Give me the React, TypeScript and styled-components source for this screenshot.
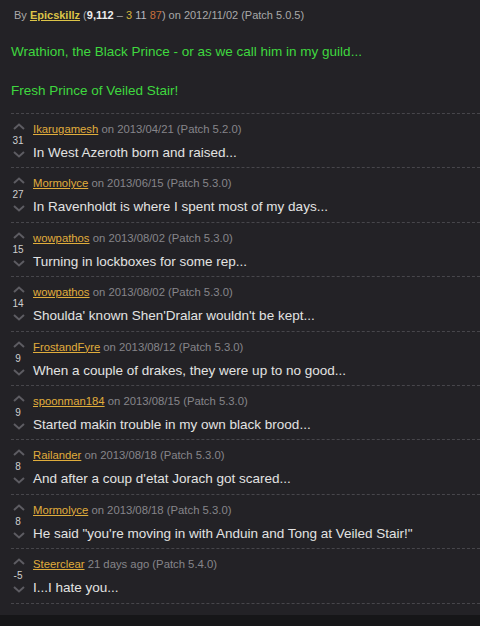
import React from "react";
import styled, { createGlobalStyle } from "styled-components";

const Global = createGlobalStyle`
  html, body { margin: 0; padding: 0; background: #232226; }
  body { font-family: "Liberation Sans", Arial, sans-serif; }
`;

const Page = styled.div`
  width: 480px;
  height: 626px;
  background: #232226;
  display: flex;
  flex-direction: column;
  overflow: hidden;
`;

const Post = styled.div`
  padding: 9px 0 0 11px;
  height: 113px;
  box-sizing: border-box;
  display: flex;
  flex-direction: column;
`;

const Byline = styled.div`
  font-size: 11px;
  line-height: 13px;
  color: #a9a9a9;
  padding-left: 3px;
`;

const Author = styled.span`
  color: #dcc448;
  font-weight: bold;
  text-decoration: underline;
`;

const Stat = styled.span<{ $c: string; $bold?: boolean }>`
  color: ${(p) => p.$c};
  font-weight: ${(p) => (p.$bold ? "bold" : "normal")};
`;

const Green = styled.p<{ $top: number }>`
  margin: 0;
  font-size: 13.5px;
  line-height: 16px;
  color: #3fd83f;
  margin-top: ${(p) => p.$top}px;
`;

const Divider = styled.div`
  margin-left: 11px;
  height: 0;
  border-top: 1px dashed #47464b;
`;

const List = styled.div`
  display: flex;
  flex-direction: column;
`;

const Comment = styled.div`
  height: 54.4px;
  box-sizing: border-box;
  display: flex;
  flex-direction: column;
`;

const Row = styled.div`
  flex: 1;
  display: flex;
  padding-left: 12px;
`;

const Votes = styled.div`
  width: 14px;
  display: flex;
  flex-direction: column;
  align-items: center;
  padding-top: 9px;
`;

const Score = styled.div`
  font-size: 10px;
  line-height: 11px;
  color: #cfcfcf;
  margin: 5px 0 5px -2px;
  height: 11px;
`;

const Body = styled.div`
  display: flex;
  flex-direction: column;
  padding-left: 7px;
  padding-top: 9px;
`;

const Meta = styled.div`
  font-size: 11.3px;
  line-height: 13px;
  color: #86858a;
`;

const Name = styled.span`
  color: #e0ad3c;
  text-decoration: underline;
`;

const Text = styled.div`
  margin-top: 9px;
  font-size: 13.5px;
  line-height: 16px;
  color: #e2e2e2;
`;

const BottomBar = styled.div`
  margin-top: auto;
  height: 11px;
  background: #161618;
`;

const Chevron = ({ up }: { up?: boolean }) => (
  <svg width="12" height="7" viewBox="0 0 12 7">
    <polyline
      points={up ? "1,6 6,1.5 11,6" : "1,1 6,5.5 11,1"}
      fill="none"
      stroke="#5d5c62"
      strokeWidth="2"
    />
  </svg>
);

const comments = [
  { n: "Ikarugamesh", d: "on 2013/04/21 (Patch 5.2.0)", s: "31", t: "In West Azeroth born and raised..." },
  { n: "Mormolyce", d: "on 2013/06/15 (Patch 5.3.0)", s: "27", t: "In Ravenholdt is where I spent most of my days..." },
  { n: "wowpathos", d: "on 2013/08/02 (Patch 5.3.0)", s: "15", t: "Turning in lockboxes for some rep..." },
  { n: "wowpathos", d: "on 2013/08/02 (Patch 5.3.0)", s: "14", t: "Shoulda' known Shen'Dralar wouldn't be kept..." },
  { n: "FrostandFyre", d: "on 2013/08/12 (Patch 5.3.0)", s: "9", t: "When a couple of drakes, they were up to no good..." },
  { n: "spoonman184", d: "on 2013/08/15 (Patch 5.3.0)", s: "9", t: "Started makin trouble in my own black brood..." },
  { n: "Railander", d: "on 2013/08/18 (Patch 5.3.0)", s: "8", t: "And after a coup d'etat Jorach got scared..." },
  { n: "Mormolyce", d: "on 2013/08/18 (Patch 5.3.0)", s: "8", t: "He said \"you're moving in with Anduin and Tong at Veiled Stair!\"" },
  { n: "Steerclear", d: "21 days ago (Patch 5.4.0)", s: "-5", t: "I...I hate you..." },
];

export default function App() {
  return (
    <Page>
      <Global />
      <Post>
        <Byline>
          By <Author>Epicskillz</Author> (<Stat $c="#eeeeee" $bold>9,112</Stat> –{" "}
          <Stat $c="#d6b43c">3</Stat> <Stat $c="#b9b9c0">11</Stat>{" "}
          <Stat $c="#c8703c">87</Stat>) on 2012/11/02 (Patch 5.0.5)
        </Byline>
        <Green $top={22}>Wrathion, the Black Prince - or as we call him in my guild...</Green>
        <Green $top={23}>Fresh Prince of Veiled Stair!</Green>
      </Post>
      <Divider />
      <List>
        {comments.map((c, i) => (
          <Comment key={i}>
            <Row>
              <Votes>
                <Chevron up />
                <Score>{c.s}</Score>
                <Chevron />
              </Votes>
              <Body>
                <Meta>
                  <Name>{c.n}</Name> {c.d}
                </Meta>
                <Text>{c.t}</Text>
              </Body>
            </Row>
            <Divider />
          </Comment>
        ))}
      </List>
      <BottomBar />
    </Page>
  );
}
